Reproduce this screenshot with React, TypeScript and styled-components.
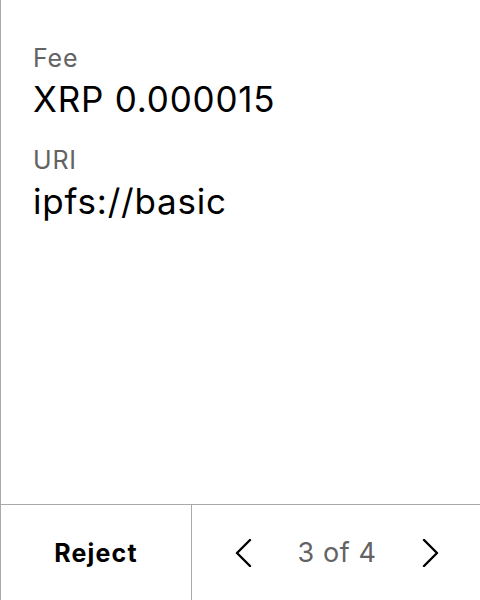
import React from "react";
import styled, { createGlobalStyle } from "styled-components";

const Global = createGlobalStyle`
  html, body { margin: 0; padding: 0; background: #fff; }
  body { font-family: Inter, "Noto Sans", sans-serif; }
  * { box-sizing: border-box; }
`;

const Screen = styled.div`
  width: 480px;
  height: 600px;
  display: flex;
  flex-direction: column;
  border-left: 1px solid #aaaaaa;
  background: #fff;
`;

const Content = styled.div`
  flex: 1;
  padding: 43px 32px 0 32px;
  display: flex;
  flex-direction: column;
  gap: 26px;
`;

const Field = styled.div`
  display: flex;
  flex-direction: column;
  gap: 6px;
`;

const Label = styled.div`
  font-size: 25px;
  line-height: 30px;
  letter-spacing: 0.8px;
  color: #636363;
`;

const Value = styled.div`
  font-size: 35px;
  line-height: 40px;
  letter-spacing: 0.8px;
  color: #000;
`;

const Footer = styled.div`
  height: 96px;
  border-top: 1px solid #aaaaaa;
  display: flex;
`;

const RejectButton = styled.div`
  width: 191px;
  border-right: 1px solid #aaaaaa;
  display: flex;
  align-items: center;
  justify-content: center;
  font-size: 25px;
  font-weight: 700;
  letter-spacing: 1.2px;
  color: #000;
`;

const Pager = styled.div`
  flex: 1;
  display: flex;
  align-items: center;
  justify-content: space-between;
  padding: 0 40px 0 42px;
`;

const PageText = styled.div`
  font-size: 27px;
  letter-spacing: 0.6px;
  color: #636363;
`;

const Chevron = ({ dir }: { dir: "left" | "right" }) => (
  <svg width="18" height="28" viewBox="0 0 18 28" fill="none">
    <path
      d={dir === "left" ? "M16 1 L3 14 L16 27" : "M2 1 L15 14 L2 27"}
      stroke="#000"
      strokeWidth="2.4"
      strokeLinecap="round"
      strokeLinejoin="round"
    />
  </svg>
);

export default function App() {
  return (
    <>
      <Global />
      <Screen>
        <Content>
          <Field>
            <Label>Fee</Label>
            <Value>XRP 0.000015</Value>
          </Field>
          <Field>
            <Label>URI</Label>
            <Value>ipfs://basic</Value>
          </Field>
        </Content>
        <Footer>
          <RejectButton>Reject</RejectButton>
          <Pager>
            <Chevron dir="left" />
            <PageText>3 of 4</PageText>
            <Chevron dir="right" />
          </Pager>
        </Footer>
      </Screen>
    </>
  );
}
